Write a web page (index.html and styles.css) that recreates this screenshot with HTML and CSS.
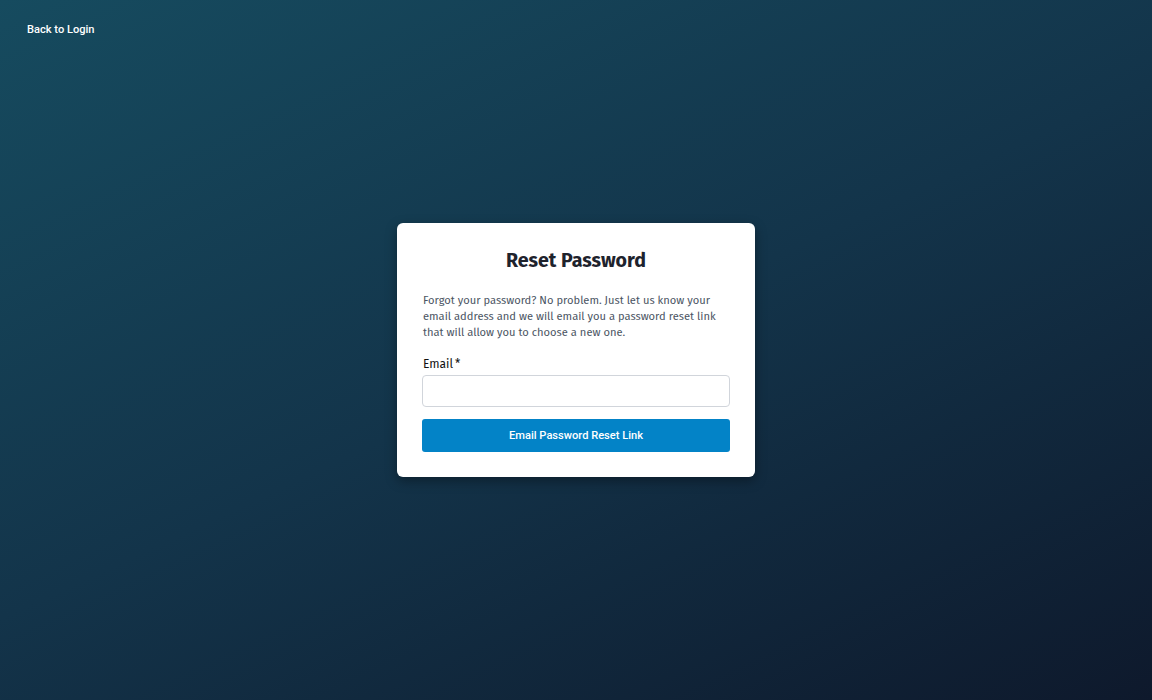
FILE: index.html
```html
<!DOCTYPE html>
<html lang="en">
<head>
<meta charset="utf-8">
<title>Reset Password</title>
<link rel="stylesheet" href="styles.css">
</head>
<body>
<div class="page">
  <header class="topbar">
    <a class="back-link" href="#">Back to Login</a>
  </header>
  <main class="center">
    <section class="card">
      <h1 class="card-title">Reset Password</h1>
      <p class="card-text">Forgot your password? No problem. Just let us know your email address and we will email you a password reset link that will allow you to choose a new one.</p>
      <form class="form">
        <label class="label" for="email">Email<span class="req">*</span></label>
        <input class="input" id="email" type="email">
        <button class="btn" type="button">Email Password Reset Link</button>
      </form>
    </section>
  </main>
</div>
</body>
</html>
```
FILE: styles.css
```css
* { box-sizing: border-box; }
html, body { margin: 0; height: 100%; }
body {
  font-family: "Fira Sans", "Noto Sans", "Liberation Sans", sans-serif;
  background: linear-gradient(155deg, #164b5f 0%, #13344a 50%, #0e192c 100%);
  color: #1f2937;
}
.page {
  height: 700px;
  display: flex;
  flex-direction: column;
}
.topbar {
  padding: 18px 27px 0;
  height: 223px;
}
.back-link {
  font-family: Roboto, "Liberation Sans", sans-serif;
  font-weight: 500;
  font-size: 11.1px;
  color: #ffffff;
  text-decoration: none;
}
.center {
  display: flex;
  justify-content: center;
}
.card {
  width: 358px;
  background: #fff;
  border-radius: 6px;
  box-shadow: 0 4px 12px rgba(0,0,0,0.35);
  padding: 25px 25px 25px 25px;
}
.card-title {
  margin: 0;
  text-align: center;
  font-size: 19.6px;
  font-weight: 700;
  color: #1e232d;
  line-height: 26px;
}
.card-text {
  margin: 19px 0 0 1px;
  font-size: 11.15px;
  line-height: 16px;
  color: #4b5563;
}
.form {
  display: flex;
  flex-direction: column;
  margin-top: 15px;
}
.label {
  font-size: 12px;
  line-height: 16px;
  color: #111;
  margin: 0 0 3px 1px;
}
.req { margin-left: 2px; }
.input {
  height: 32px;
  border: 1px solid #d1d5db;
  border-radius: 4px;
  outline: none;
}
.btn {
  margin-top: 12px;
  height: 33px;
  border: none;
  border-radius: 3px;
  background: #0383c7;
  color: #fff;
  font-family: Roboto, "Liberation Sans", sans-serif;
  font-weight: 500;
  font-size: 11.1px;
}
```
